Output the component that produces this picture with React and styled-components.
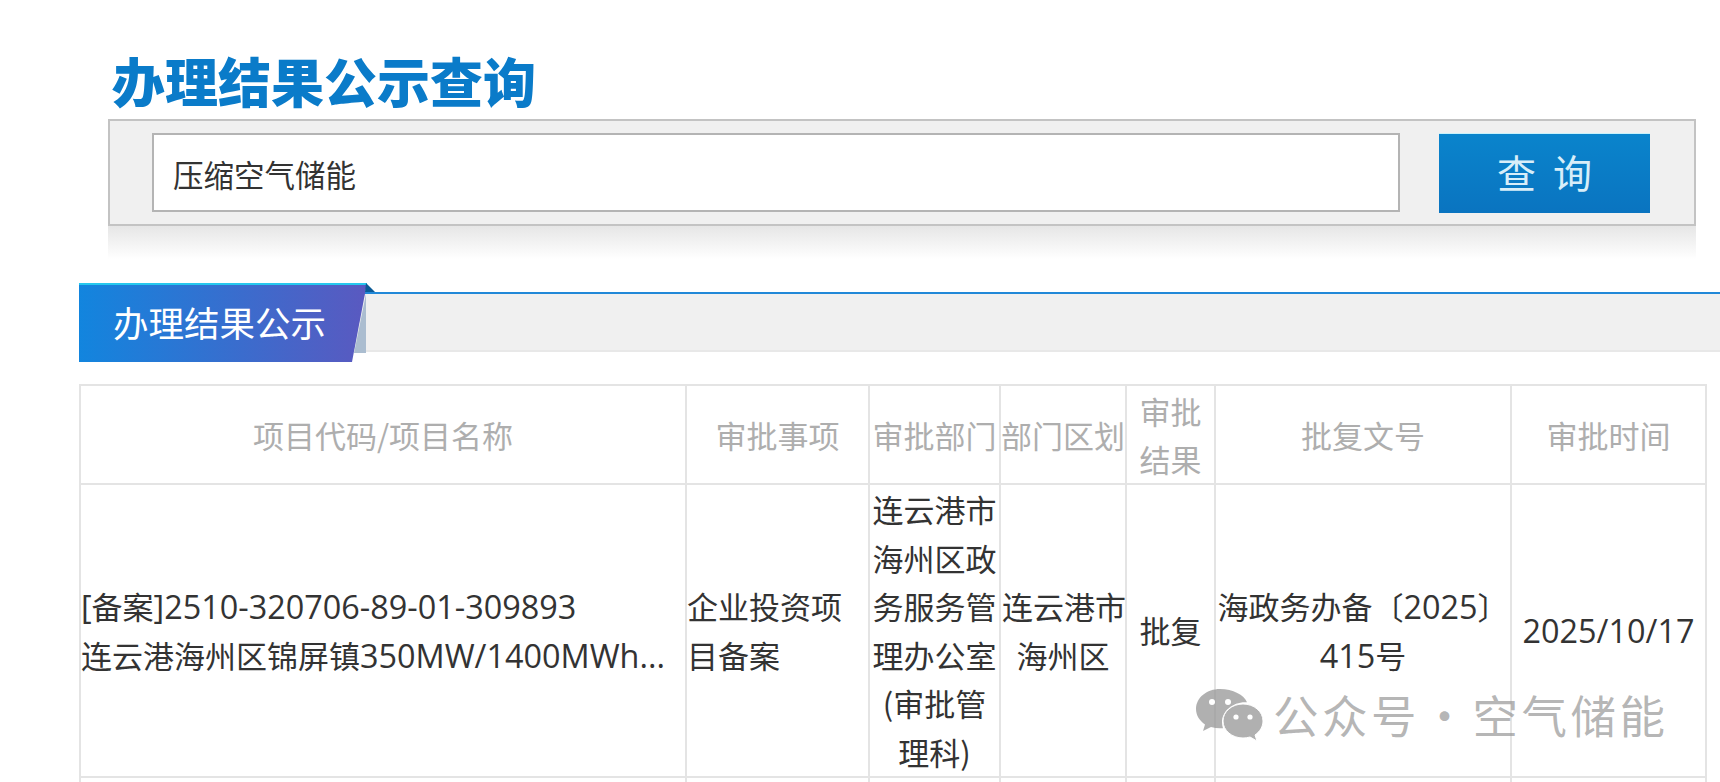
import React from "react";
import styled, { createGlobalStyle } from "styled-components";

const FONT = `"Noto Sans CJK SC", "Noto Sans", sans-serif`;

const Global = createGlobalStyle`
  html, body { margin: 0; padding: 0; background: #fff; }
  body { width: 1720px; height: 782px; overflow: hidden; font-family: ${FONT}; }
`;

const Page = styled.div`
  position: relative;
  width: 1720px;
  height: 782px;
  overflow: hidden;
  padding-top: 48px;
  box-sizing: border-box;
`;

const SearchSection = styled.section`
  margin: 0 24px 0 108px;
`;

const Title = styled.h1`
  margin: 0 0 0 4px;
  height: 71px;
  font-size: 53px;
  line-height: 65px;
  font-weight: 900;
  color: #0a7bc9;
  white-space: nowrap;
`;

const SearchBar = styled.form`
  box-sizing: border-box;
  height: 107px;
  display: flex;
  align-items: center;
  gap: 39px;
  padding: 0 44px 0 42px;
  background: #f0f0f0;
  border: 2px solid #c3c3c3;
`;

const SearchInput = styled.div`
  box-sizing: border-box;
  flex: 1;
  height: 79px;
  padding-left: 19px;
  background: #fff;
  border: 2px solid #b4b4b4;
  color: #333;
  font-size: 30.5px;
  line-height: 79px;
`;

const SearchButton = styled.button`
  width: 211px;
  height: 80px;
  padding: 0 0 4px;
  border: 0;
  border-top: 1px solid #c8f2fb;
  background: linear-gradient(#0a84cc, #0a74c0);
  color: #d8eef9;
  font-family: ${FONT};
  font-size: 39px;
  letter-spacing: 17px;
  text-indent: 17px;
`;

const Reflection = styled.div`
  height: 33px;
  background: linear-gradient(#e6e6e6, #fbfbfb 85%, #fff);
`;

const TabBar = styled.div`
  position: relative;
  margin: 24px 0 0 79px;
  height: 79px;
  display: flex;
`;

const Band = styled.div`
  flex: 1;
  margin-top: 9px;
  height: 60px;
  background: #f0f0f0;
  border-top: 2px solid #2188d8;
  border-bottom: 2px solid #e8e8e8;
  box-sizing: border-box;
`;

const Tab = styled.div`
  position: absolute;
  left: 0;
  top: 0;
  width: 288px;
  height: 79px;
  padding-left: 34px;
  box-sizing: border-box;
  background: linear-gradient(90deg, #1285de, #5a59c0);
  border-top: 2px solid #26c8ee;
  clip-path: polygon(0 0, 100% 0, 273px 100%, 0 100%);
  color: #fff;
  font-size: 35.5px;
  line-height: 74px;
  white-space: nowrap;
`;

const TabFold = styled.svg`
  position: absolute;
  left: 272px;
  top: 0;
`;

const Table = styled.table`
  margin: 22px 0 0 79px;
  width: 1626px;
  table-layout: fixed;
  border-collapse: collapse;
`;

const HeadCell = styled.th`
  height: 97px;
  padding: 0;
  border: 2px solid #e4e4e4;
  color: #aeaeae;
  font-size: 31px;
  font-weight: 400;
  line-height: 48px;
  text-align: center;
  overflow: hidden;
  white-space: ${(p) => (p.$wrap ? "normal" : "nowrap")};
`;

const Cell = styled.td`
  padding: 0 ${(p) => (p.$left ? "0" : "1px")};
  border: 2px solid #e4e4e4;
  color: #333;
  font-size: 31px;
  line-height: 48.5px;
  text-align: ${(p) => (p.$left ? "left" : "center")};
  vertical-align: middle;
  word-break: break-all;
`;

const SpacerCell = styled.td`
  height: 60px;
  border: 2px solid #e4e4e4;
`;

const Num = styled.span`
  font-family: "Open Sans", sans-serif;
  font-size: 32.4px;
`;

const SingleLine = styled.div`
  white-space: nowrap;
`;

const Watermark = styled.div`
  position: absolute;
  left: 1196px;
  top: 682px;
  display: flex;
  align-items: center;
  gap: 9px;
  color: rgba(150, 150, 150, 0.7);
  font-size: 45.5px;
  line-height: 56px;
  letter-spacing: 3.5px;
  word-spacing: -12px;
  white-space: nowrap;
`;

const WeChatIcon = styled.svg`
  margin-top: 6px;
`;

const WeChat = () => (
  <WeChatIcon width="68" height="58" viewBox="0 0 68 58" fill="none">
    <path
      d="M24 1C11 1 0 9.500 0 21c0 6.500 3.500 11.500 9 15.500L7 43l8-4c3 .9 6 1.300 9 1.300 1 0 2 0 3-.1-.7-2-1-4-1-6 0-11 10.500-20 23-20h2C48 7 37 1 24 1z"
      fill="rgba(150,150,150,.75)"
    />
    <circle cx="16" cy="14" r="3" fill="#fff" />
    <circle cx="32" cy="14" r="3" fill="#fff" />
    <path
      d="M47 16c-11 0-20 7.500-20 17s9 17 20 17c2.500 0 5-.4 7-1l7 4-2-6c5-3.500 8-8.500 8-14 0-9.500-9-17-20-17z"
      fill="rgba(150,150,150,.75)"
      stroke="#fff"
      strokeWidth="1"
    />
    <circle cx="40" cy="29" r="2.600" fill="#fff" />
    <circle cx="54" cy="29" r="2.600" fill="#fff" />
  </WeChatIcon>
);

const columns = [606, 183, 131, 126, 89, 296, 195];
const heads = ["项目代码/项目名称", "审批事项", "审批部门", "部门区划", "审批结果", "批复文号", "审批时间"];

export default function App() {
  return (
    <Page>
      <Global />
      <SearchSection>
        <Title>办理结果公示查询</Title>
        <SearchBar>
          <SearchInput>压缩空气储能</SearchInput>
          <SearchButton type="button">查询</SearchButton>
        </SearchBar>
        <Reflection />
      </SearchSection>

      <TabBar>
        <Band />
        <Tab>办理结果公示</Tab>
        <TabFold width="24" height="72" viewBox="0 0 24 72">
          <path d="M15 0l9 9H14z" fill="#0b5a96" />
          <path d="M15 11 L3 70 H15z" fill="#abbdd0" />
        </TabFold>
      </TabBar>

      <Table>
        <colgroup>
          {columns.map((w, i) => (
            <col key={i} style={{ width: w }} />
          ))}
        </colgroup>
        <thead>
          <tr>
            {heads.map((h, i) => (
              <HeadCell key={h} $wrap={i === 4}>
                {h}
              </HeadCell>
            ))}
          </tr>
        </thead>
        <tbody>
          <tr>
            <Cell $left>
              <SingleLine>
                <Num>[</Num>备案<Num>]2510-320706-89-01-309893</Num>
              </SingleLine>
              <SingleLine>
                连云港海州区锦屏镇<Num>350MW/1400MWh...</Num>
              </SingleLine>
            </Cell>
            <Cell $left>企业投资项目备案</Cell>
            <Cell>连云港市海州区政务服务管理办公室(审批管理科)</Cell>
            <Cell>
              <SingleLine>连云港市</SingleLine>
              <SingleLine>海州区</SingleLine>
            </Cell>
            <Cell>批复</Cell>
            <Cell>
              <SingleLine>
                海政务办备〔<Num>2025</Num>〕
              </SingleLine>
              <SingleLine>
                <Num>415</Num>号
              </SingleLine>
            </Cell>
            <Cell>
              <Num>2025/10/17</Num>
            </Cell>
          </tr>
          <tr>
            {columns.map((w) => (
              <SpacerCell key={w} />
            ))}
          </tr>
        </tbody>
      </Table>

      <Watermark>
        <WeChat />
        <span>公众号 · 空气储能</span>
      </Watermark>
    </Page>
  );
}
